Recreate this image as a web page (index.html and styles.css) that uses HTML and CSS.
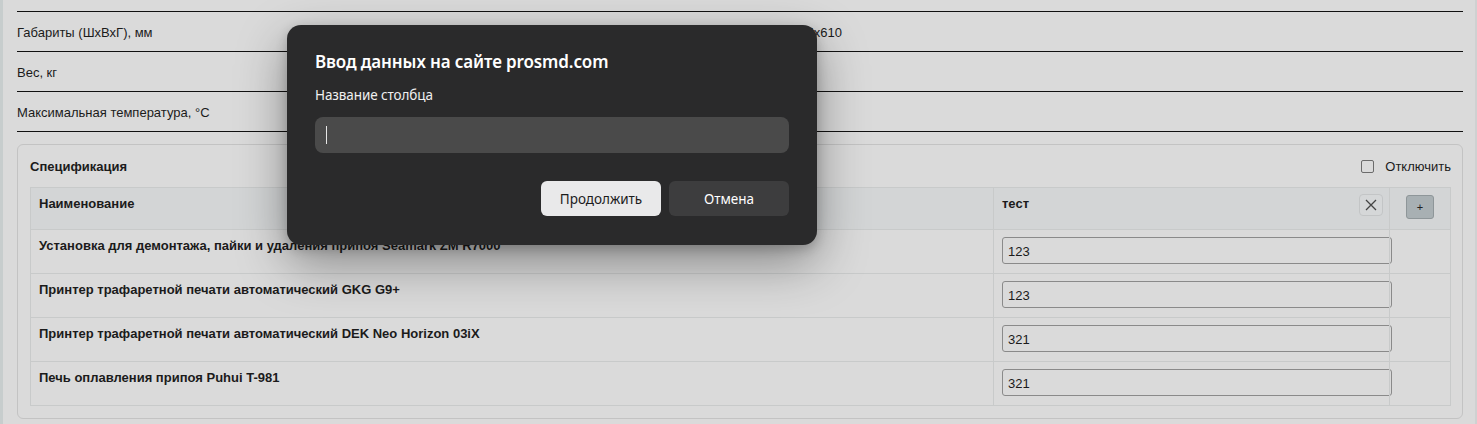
FILE: index.html
```html
<!DOCTYPE html>
<html lang="ru">
<head>
<meta charset="utf-8">
<title>Спецификация</title>
<link rel="stylesheet" href="styles.css">
</head>
<body>
<div class="page">
  <div class="props">
    <div class="prop"><div class="prop-name">Габариты (ШхВхГ), мм</div><div class="prop-val">865x610</div></div>
    <div class="prop"><div class="prop-name">Вес, кг</div><div class="prop-val"></div></div>
    <div class="prop"><div class="prop-name">Максимальная температура, °C</div><div class="prop-val"></div></div>
  </div>

  <div class="card">
    <div class="card-head">
      <div class="card-title">Спецификация</div>
      <label class="toggle"><span class="checkbox"></span><span>Отключить</span></label>
    </div>
    <table class="spec">
      <colgroup><col class="c1"><col class="c2"><col class="c3"></colgroup>
      <thead>
        <tr>
          <th>Наименование</th>
          <th><div class="th-flex"><span>тест</span><button class="btn-x" type="button"><svg width="12" height="12" viewBox="0 0 12 12"><path d="M1 1L11 11M11 1L1 11" stroke="#444" stroke-width="1.3"/></svg></button></div></th>
          <th class="th-add"><button class="btn-plus" type="button">+</button></th>
        </tr>
      </thead>
      <tbody>
        <tr><td>Установка для демонтажа, пайки и удаления припоя Seamark ZM R7000</td><td><input class="cell-input" value="123"></td><td></td></tr>
        <tr><td>Принтер трафаретной печати автоматический GKG G9+</td><td><input class="cell-input" value="123"></td><td></td></tr>
        <tr><td>Принтер трафаретной печати автоматический DEK Neo Horizon 03iX</td><td><input class="cell-input" value="321"></td><td></td></tr>
        <tr><td>Печь оплавления припоя Puhui T-981</td><td><input class="cell-input" value="321"></td><td></td></tr>
      </tbody>
    </table>
  </div>
</div>

<div class="dialog">
  <div class="dlg-title">Ввод данных на сайте prosmd.com</div>
  <div class="dlg-label">Название столбца</div>
  <div class="dlg-input"><span class="caret"></span></div>
  <div class="dlg-actions">
    <button class="dlg-btn primary" type="button">Продолжить</button>
    <button class="dlg-btn secondary" type="button">Отмена</button>
  </div>
</div>
</body>
</html>
```

FILE: styles.css
```css
html, body { margin: 0; padding: 0; }
body {
  width: 1477px;
  height: 424px;
  overflow: hidden;
  background: #dadada;
  font-family: "Liberation Sans", Arial, sans-serif;
  font-size: 13px;
  color: #1b1b1b;
  box-sizing: border-box;
  border-left: 3px solid #c7cdcd;
  border-right: 2px solid #cfd1d1;
  position: relative;
}
.page {
  padding: 11px 12px 0 14px;
}
.props {
  border-top: 1px solid #111;
}
.prop {
  display: grid;
  grid-template-columns: 775px 1fr;
  height: 39px;
  align-items: center;
  border-bottom: 1px solid #111;
}
.prop-name, .prop-val { line-height: 15px; padding-top: 1px; }

.card {
  margin-top: 12px;
  border: 1px solid #c3c3c3;
  border-radius: 6px;
  padding: 13px 11px 12px 12px;
}
.card-head {
  display: flex;
  justify-content: space-between;
  align-items: center;
  height: 16px;
  margin-bottom: 13px;
}
.card-title { font-weight: bold; }
.toggle {
  display: flex;
  align-items: center;
  gap: 11px;
}
.checkbox {
  width: 11px;
  height: 11px;
  border: 1px solid #6b6b6b;
  border-radius: 2px;
  background: #dadada;
}

.spec {
  border-collapse: collapse;
  width: 1420px;
  table-layout: fixed;
}
.spec col.c1 { width: 963px; }
.spec col.c2 { width: 396px; }
.spec col.c3 { width: 61px; }
.spec th, .spec td {
  border: 1px solid #c8caca;
  padding: 8px 8px;
  text-align: left;
  vertical-align: top;
  line-height: 15px;
  font-weight: bold;
}
.spec thead th {
  background: #d3d5d6;
  height: 25px;
  padding-top: 8px;
  padding-bottom: 8px;
}
.spec tbody td { height: 28px; padding-top: 7px; }
.spec tbody td:first-child { padding-top: 8px; height: 27px; }
.th-flex {
  display: flex;
  justify-content: space-between;
  align-items: flex-start;
}
.btn-x {
  width: 24px;
  height: 22px;
  margin-top: -2px;
  margin-right: -2px;
  border: 1px solid #c3c5c6;
  border-radius: 4px;
  background: #d5d7d8;
  display: flex;
  align-items: center;
  justify-content: center;
  padding: 0;
}
.th-add { text-align: center !important; }
.btn-plus {
  width: 28px;
  height: 24px;
  margin-top: -1px;
  border: 1px solid #8e9699;
  border-radius: 3px;
  background: #a8b0b3;
  color: #222;
  font-family: "Liberation Sans", Arial, sans-serif;
  font-size: 11px;
  padding: 0;
}
.cell-input {
  box-sizing: border-box;
  width: 390px;
  height: 27px;
  border: 1px solid #8a8a8a;
  border-radius: 3px;
  background: #dadada;
  font-family: "Liberation Sans", Arial, sans-serif;
  font-size: 13px;
  color: #1b1b1b;
  padding: 2px 5px 0;
  margin: 0;
  display: block;
}

.dialog {
  position: absolute;
  left: 284px;
  top: 25px;
  width: 530px;
  height: 220px;
  box-sizing: border-box;
  padding: 26px 28px 0 28px;
  background: #2a2a2b;
  border-radius: 14px;
  box-shadow: 0 18px 50px rgba(0,0,0,0.38), 0 4px 12px rgba(0,0,0,0.2);
  font-family: "Noto Sans", "Open Sans", sans-serif;
  color: #fff;
}
.dlg-title {
  font-size: 17px;
  font-weight: 600;
  line-height: 22px;
  letter-spacing: -0.12px;
}
.dlg-label {
  margin-top: 13px;
  font-size: 13.5px;
  line-height: 19px;
  color: #f0f0f0;
  letter-spacing: -0.1px;
}
.dlg-input {
  margin-top: 12px;
  height: 36px;
  background: #4a4a4a;
  border-radius: 8px;
  display: flex;
  align-items: center;
  padding-left: 11px;
}
.caret {
  width: 1px;
  height: 18px;
  background: #e6e6e6;
}
.dlg-actions {
  margin-top: 28px;
  display: flex;
  justify-content: flex-end;
  gap: 8px;
}
.dlg-btn {
  width: 120px;
  height: 35px;
  border: none;
  border-radius: 6px;
  font-family: "Noto Sans", "Open Sans", sans-serif;
  font-size: 13.5px;
  padding: 0;
}
.dlg-btn.primary { background: #e9e9ea; color: #1c1c1c; }
.dlg-btn.secondary { background: #3d3d3e; color: #fff; }
```
